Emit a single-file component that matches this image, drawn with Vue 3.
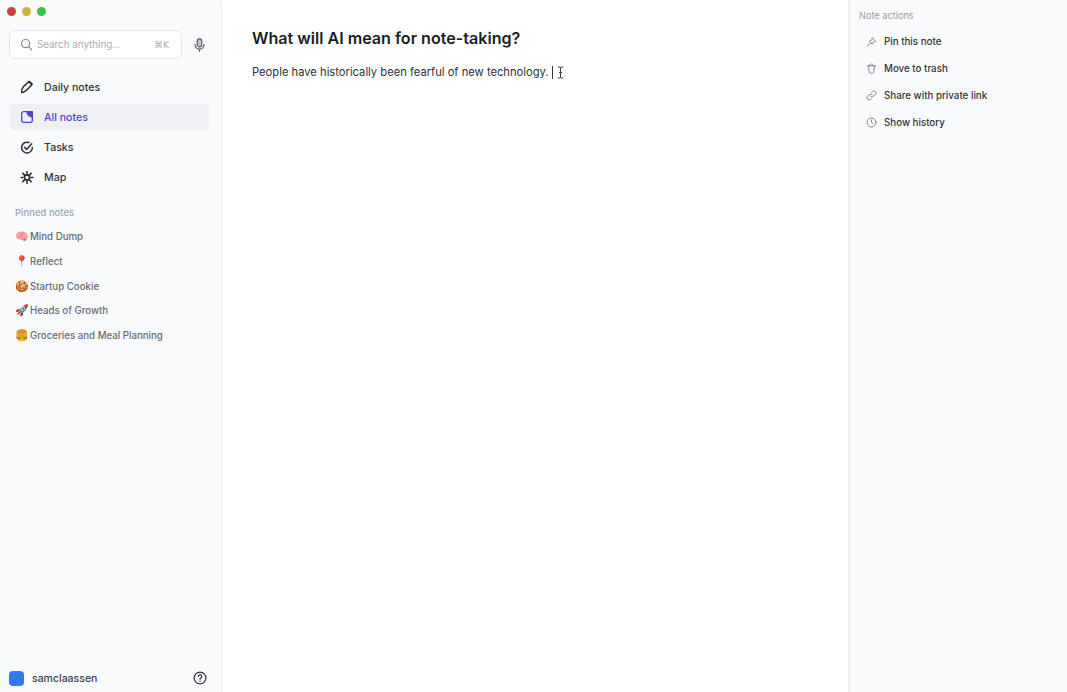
<script setup>
const navItems = [
  { id: 'daily', label: 'Daily notes' },
  { id: 'all', label: 'All notes', active: true },
  { id: 'tasks', label: 'Tasks' },
  { id: 'map', label: 'Map' },
];
const pinned = [
  { emoji: '🧠', name: 'Mind Dump' },
  { emoji: '📍', name: 'Reflect' },
  { emoji: '🍪', name: 'Startup Cookie' },
  { emoji: '🚀', name: 'Heads of Growth' },
  { emoji: '🍔', name: 'Groceries and Meal Planning' },
];
const actions = [
  { id: 'pin', label: 'Pin this note' },
  { id: 'trash', label: 'Move to trash' },
  { id: 'link', label: 'Share with private link' },
  { id: 'history', label: 'Show history' },
];
</script>

<template>
  <div class="app">
    <aside class="sidebar">
      <div class="traffic">
        <span class="dot red"></span>
        <span class="dot yellow"></span>
        <span class="dot green"></span>
      </div>

      <div class="search-row">
        <div class="search">
          <svg class="search-icon" width="13" height="13" viewBox="0 0 14 14" fill="none" stroke="#868b94" stroke-width="1.3" stroke-linecap="round">
            <circle cx="6" cy="6" r="4.4" />
            <path d="M9.3 9.3 12.6 12.6" />
          </svg>
          <span class="search-text">Search anything...</span>
          <span class="search-key">⌘K</span>
        </div>
        <svg class="mic" width="11" height="14" viewBox="0 0 11 14" fill="none" stroke="#555a63" stroke-width="1.2" stroke-linecap="round">
          <rect x="3.2" y="0.8" width="4.6" height="8" rx="2.3" fill="#c4c6cb" />
          <path d="M1 6.600a4.500 4.500 0 0 0 9 0M5.500 11.100v2.200" />
        </svg>
      </div>

      <nav class="nav">
        <div v-for="item in navItems" :key="item.id" class="nav-item" :class="{ active: item.active }">
          <svg v-if="item.id === 'daily'" class="nav-icon" width="14" height="14" viewBox="0 0 14 14" fill="none" stroke="#23262c" stroke-width="1.4" stroke-linejoin="round">
            <path d="M1.600 12.600c-.2-2.600.5-4.600 2-6.200L8.800 1.600l3.300 3-5 5.200c-1.500 1.600-3.400 2.500-5.500 2.800Z" />
            <path d="M8.800 1.600 12.100 4.600" stroke-width="2" />
          </svg>
          <svg v-else-if="item.id === 'all'" class="nav-icon" width="12" height="12" viewBox="0 0 12 12" fill="none" stroke="#4f46c8" stroke-width="1.3">
            <rect x="0.700" y="0.700" width="10.600" height="10.600" rx="2" />
            <path d="M6 0.700h5.300V6C8.500 6 6 3.500 6 0.700Z" fill="#4f46c8" />
          </svg>
          <svg v-else-if="item.id === 'tasks'" class="nav-icon" width="13" height="13" viewBox="0 0 13 13" fill="none" stroke="#30343b" stroke-width="1.5" stroke-linecap="round" stroke-linejoin="round">
            <path d="M8.400 1.500A5.400 5.400 0 1 0 11.900 6.500" />
            <path d="M4 6.300 6.200 8.400 11.200 2.800" />
          </svg>
          <svg v-else class="nav-icon" width="13" height="13" viewBox="0 0 13 13" fill="none" stroke="#23262c" stroke-width="1.6" stroke-linecap="round">
            <circle cx="6.500" cy="6.500" r="2.600" />
            <path d="M6.500 .7v1.600M6.500 10.700v1.600M.7 6.500h1.600M10.700 6.500h1.600M2.300 2.300l1.300 1.300M9.400 9.400l1.300 1.300M2.300 10.700l1.300-1.300M9.400 3.600l1.300-1.300" />
          </svg>
          <span>{{ item.label }}</span>
        </div>
      </nav>

      <div class="pinned-title">Pinned notes</div>
      <div class="pinned">
        <div v-for="note in pinned" :key="note.name" class="pinned-item">
          <span class="emoji">{{ note.emoji }}</span>
          <span>{{ note.name }}</span>
        </div>
      </div>

      <div class="user">
        <span class="avatar"></span>
        <span class="username">samclaassen</span>
        <svg class="help" width="14" height="14" viewBox="0 0 14 14" fill="none" stroke="#2b2e34" stroke-width="1.2" stroke-linecap="round">
          <circle cx="7" cy="7" r="5.900" />
          <path d="M5.300 5.500a1.750 1.750 0 1 1 2.600 1.500c-.6.350-.9.700-.9 1.300" />
          <path d="M7 10.200v.1" />
        </svg>
      </div>
    </aside>

    <main class="editor">
      <h1 class="title">What will AI mean for note-taking?</h1>
      <p class="body-line">
        <span>People have historically been fearful of new technology.</span>
        <span class="caret"></span>
        <svg class="ibeam" width="7" height="13" viewBox="0 0 7 13" fill="none" stroke="#3c3f45" stroke-width="1">
          <path d="M.8 1h1.600c.6 0 1.100.3 1.100 1v9c0 .7.500 1 1.100 1h1.600M6.200 1H4.600c-.6 0-1.100.3-1.100 1v9c0 .7-.5 1-1.100 1H.8M2 6.500h3" />
        </svg>
      </p>
    </main>

    <aside class="actions">
      <div class="actions-title">Note actions</div>
      <div v-for="action in actions" :key="action.id" class="action">
        <svg v-if="action.id === 'pin'" width="10" height="10" viewBox="0 0 10 10" fill="none" stroke="#858a93" stroke-width="1" stroke-linejoin="round" stroke-linecap="round">
          <path d="M5.900 1 9 4.100 7.300 4.700 5.600 7.100 2.900 4.400 5.300 2.700ZM4.200 5.800 1 9" />
        </svg>
        <svg v-else-if="action.id === 'trash'" width="10" height="11" viewBox="0 0 10 11" fill="none" stroke="#858a93" stroke-width="1" stroke-linejoin="round" stroke-linecap="round">
          <path d="M.8 2.800h8.400M2 2.800l.7 6.300c.1.600.5 1 1.100 1h2.400c.6 0 1-.4 1.100-1L8 2.800M3.200 2.800C3.300 1.600 4 1 5 1s1.700.6 1.800 1.800" />
        </svg>
        <svg v-else-if="action.id === 'link'" width="11" height="11" viewBox="0 0 11 11" fill="none" stroke="#858a93" stroke-width="1" stroke-linecap="round">
          <path d="M4.700 6.300a2 2 0 0 0 2.900 0l1.800-1.800a2 2 0 0 0-2.900-2.900l-.8.800M6.300 4.700a2 2 0 0 0-2.900 0L1.600 6.500a2 2 0 0 0 2.900 2.900l.8-.8" />
        </svg>
        <svg v-else width="11" height="11" viewBox="0 0 11 11" fill="none" stroke="#858a93" stroke-width="1" stroke-linecap="round" stroke-linejoin="round">
          <circle cx="5.500" cy="5.500" r="4.500" />
          <path d="M5.500 2.900v2.600l1.700 1" />
        </svg>
        <span>{{ action.label }}</span>
      </div>
    </aside>
  </div>
</template>

<style scoped>
.app {
  display: flex;
  width: 1067px;
  height: 692px;
  overflow: hidden;
  background: #fff;
  font-family: Inter, "Liberation Sans", sans-serif;
  color: #23262c;
}

.sidebar {
  box-sizing: border-box;
  width: 222px;
  flex-shrink: 0;
  display: flex;
  flex-direction: column;
  background: #f9fafc;
  border-right: 1px dotted #dfe1e6;
}

.traffic {
  display: flex;
  gap: 6px;
  padding: 7px 0 0 7px;
}

.dot {
  width: 9px;
  height: 9px;
  border-radius: 50%;
}

.red { background: #c8413c; }
.yellow { background: #cfb440; }
.green { background: #3fc24a; }

.search-row {
  display: flex;
  align-items: center;
  margin-top: 14px;
  padding-left: 9px;
}

.search {
  box-sizing: border-box;
  width: 173px;
  height: 29px;
  display: flex;
  align-items: center;
  padding: 0 12px 0 10px;
  background: #fff;
  border: 1px solid #e3e5ea;
  border-radius: 6px;
}

.search-text {
  margin-left: 4px;
  font-size: 9.8px;
  color: #a9adb5;
  flex: 1;
}

.search-key {
  font-size: 9px;
  color: #a9adb5;
  font-family: "DejaVu Sans", Inter, sans-serif;
}

.mic {
  margin-left: 12px;
}

.nav {
  display: flex;
  flex-direction: column;
  gap: 4px;
  margin-top: 15px;
  padding: 0 12px 0 10px;
}

.nav-item {
  height: 26px;
  display: flex;
  align-items: center;
  padding-left: 10px;
  border-radius: 4px;
  font-size: 10.6px;
  font-weight: 500;
  color: #30343b;
}

.nav-item .nav-icon {
  flex-shrink: 0;
  width: 14px;
  margin-right: 10px;
}

.nav-item.active {
  background: #eff0f3;
  color: #4f46c8;
}

.pinned-title {
  margin-top: 17px;
  padding-left: 15px;
  font-size: 9.5px;
  font-weight: 500;
  line-height: 12px;
  color: #a0a4ac;
}

.pinned {
  display: flex;
  flex-direction: column;
  margin-top: 5.4px;
  padding-left: 15px;
}

.pinned-item {
  height: 24.7px;
  display: flex;
  align-items: center;
  gap: 2px;
  font-size: 9.7px;
  font-weight: 500;
  color: #676c76;
  white-space: nowrap;
}

.emoji {
  width: 13px;
  font-size: 11px;
  font-family: "Noto Color Emoji", "Noto Sans", sans-serif;
}

.user {
  margin-top: auto;
  height: 28px;
  display: flex;
  align-items: center;
  padding: 0 14px 0 9px;
}

.avatar {
  width: 15px;
  height: 15px;
  border-radius: 4px;
  background: #3478f0;
}

.username {
  flex: 1;
  margin-left: 8px;
  font-size: 10.5px;
  font-weight: 500;
  color: #3b3f46;
}

.editor {
  flex: 1;
  padding: 0 30px;
}

.title {
  margin: 26px 0 0;
  font-size: 16.1px;
  line-height: 24px;
  font-weight: 600;
  color: #1b1e24;
}

.body-line {
  display: flex;
  align-items: center;
  margin: 14px 0 0;
  font-size: 11.2px;
  line-height: 16px;
  color: #2e3137;
}

.caret {
  width: 1px;
  height: 13px;
  margin-left: 3px;
  background: #33363c;
}

.ibeam {
  margin-left: 4px;
}

.actions {
  box-sizing: border-box;
  width: 219px;
  flex-shrink: 0;
  padding: 10px 0 0 9px;
  background: #f9fafc;
  border-left: 2px solid #eeeff2;
}

.actions-title {
  font-size: 9.2px;
  line-height: 12px;
  color: #9a9ea6;
  margin-bottom: 6px;
}

.action {
  height: 27px;
  display: flex;
  align-items: center;
  padding-left: 6.5px;
  font-size: 9.75px;
  font-weight: 500;
  color: #30343b;
}

.action svg {
  width: 11px;
  flex-shrink: 0;
  margin-right: 7.5px;
}
</style>

<style>
html, body {
  margin: 0;
  background: #fff;
}
</style>
